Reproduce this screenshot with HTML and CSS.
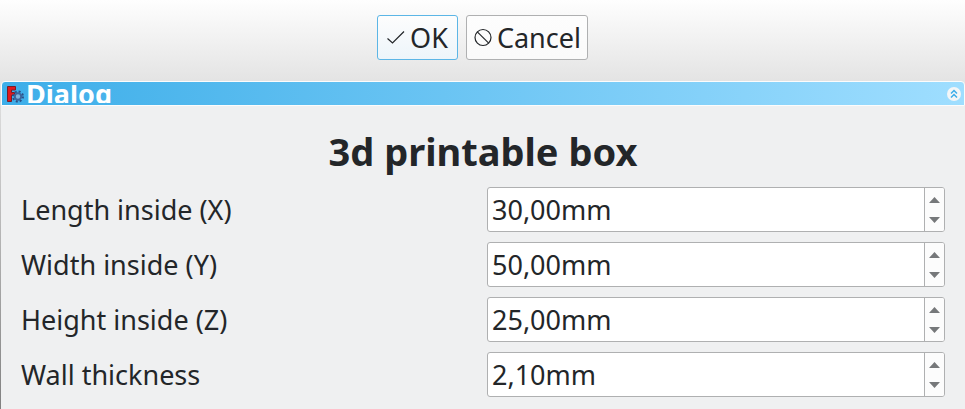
FILE: index.html
```html
<!DOCTYPE html>
<html lang="en">
<head>
<meta charset="utf-8">
<meta name="viewport" content="width=device-width, initial-scale=1">
<title>3d printable box</title>
<link rel="stylesheet" href="styles.css">
</head>
<body>
<form class="task">
  <div class="actions">
    <button class="button button-default" type="button">
      <svg class="button-icon" viewBox="0 0 20 20" aria-hidden="true"><path d="M1.5 10.500 6.500 15 18 3.500"/></svg>
      OK
    </button>
    <button class="button" type="button">
      <svg class="button-icon" viewBox="0 0 20 20" aria-hidden="true"><circle cx="10" cy="9.500" r="8"/><path d="M4.300 3.800 15.700 15.200"/></svg>
      Cancel
    </button>
  </div>
  <section class="panel">
    <header class="panel-header">
      <svg class="logo" viewBox="0 0 18 18" aria-hidden="true">
        <path class="logo-mark" d="M1.500 1.500H9.500V5H5.500V7.500H8.500V10.500H5.500V16.500H1.500z"/>
        <circle class="gear-teeth" cx="12" cy="11.500" r="5"/>
        <circle class="gear-ring" cx="12" cy="11.500" r="3.200"/>
      </svg>
      <h2 class="panel-title">Dialog</h2>
      <button class="collapse" type="button" aria-label="Collapse">
        <svg viewBox="0 0 14 14" aria-hidden="true"><path d="M4 6.500 7 3.500l3 3M4 10.500l3-3 3 3"/></svg>
      </button>
    </header>
    <div class="panel-body">
      <h1 class="heading">3d printable box</h1>
      <div class="row">
        <label for="length">Length inside (X)</label>
        <div class="spin">
          <input id="length" type="text" value="30,00mm">
          <div class="steps">
            <button class="step" type="button" aria-label="Increase length"><svg viewBox="0 0 11 6"><path d="M0 6 5.500 0 11 6z"/></svg></button>
            <button class="step" type="button" aria-label="Decrease length"><svg viewBox="0 0 11 6"><path d="M0 0h11L5.500 6z"/></svg></button>
          </div>
        </div>
      </div>
      <div class="row">
        <label for="width">Width inside (Y)</label>
        <div class="spin">
          <input id="width" type="text" value="50,00mm">
          <div class="steps">
            <button class="step" type="button" aria-label="Increase width"><svg viewBox="0 0 11 6"><path d="M0 6 5.500 0 11 6z"/></svg></button>
            <button class="step" type="button" aria-label="Decrease width"><svg viewBox="0 0 11 6"><path d="M0 0h11L5.500 6z"/></svg></button>
          </div>
        </div>
      </div>
      <div class="row">
        <label for="height">Height inside (Z)</label>
        <div class="spin">
          <input id="height" type="text" value="25,00mm">
          <div class="steps">
            <button class="step" type="button" aria-label="Increase height"><svg viewBox="0 0 11 6"><path d="M0 6 5.500 0 11 6z"/></svg></button>
            <button class="step" type="button" aria-label="Decrease height"><svg viewBox="0 0 11 6"><path d="M0 0h11L5.500 6z"/></svg></button>
          </div>
        </div>
      </div>
      <div class="row">
        <label for="wall">Wall thickness</label>
        <div class="spin">
          <input id="wall" type="text" value="2,10mm">
          <div class="steps">
            <button class="step" type="button" aria-label="Increase wall thickness"><svg viewBox="0 0 11 6"><path d="M0 6 5.500 0 11 6z"/></svg></button>
            <button class="step" type="button" aria-label="Decrease wall thickness"><svg viewBox="0 0 11 6"><path d="M0 0h11L5.500 6z"/></svg></button>
          </div>
        </div>
      </div>
    </div>
  </section>
</form>
</body>
</html>
```
FILE: styles.css
```css
* {
  box-sizing: border-box;
}

body {
  margin: 0;
  color: #232629;
  font: 27px/36px "Noto Sans", sans-serif;
}

button,
input {
  margin: 0;
  color: inherit;
  font: inherit;
}

svg {
  display: block;
}

.task {
  background: linear-gradient(#fefefe, #e4e4e4 80px, #808080);
}

.actions {
  display: flex;
  justify-content: center;
  gap: 8px;
  padding: 15px 0 21px;
}

.button {
  display: flex;
  align-items: center;
  gap: 4px;
  height: 45px;
  padding: 0 6px;
  border: 1px solid #afb0b1;
  border-radius: 3px;
  background: linear-gradient(#fdfdfd, #fafafa);
}

.button-default {
  padding: 0 9px 0 8px;
  border-color: #5cb6e6;
  background: linear-gradient(#fdfdfd, #edf5fa);
}

.button-icon {
  width: 20px;
  height: 20px;
  fill: none;
  stroke: #232629;
  stroke-width: 1.2;
}

.panel {
  padding-left: 1px;
}

.panel-header {
  display: flex;
  align-items: center;
  height: 25px;
  padding: 0 3px 0 4px;
  border: 1px solid #fcfcfc;
  border-radius: 4px 4px 0 0;
  background: linear-gradient(90deg, #3daee9, #9fdeff);
}

.logo {
  width: 18px;
  height: 18px;
}

.logo-mark {
  fill: #e0181c;
  stroke: #781c28;
  stroke-width: 1;
}

.gear-teeth {
  fill: none;
  stroke: #2c4f86;
  stroke-width: 2;
  stroke-dasharray: 2 1.93;
}

.gear-ring {
  fill: #7fb4dc;
  stroke: #3c659c;
  stroke-width: 2;
}

.panel-title {
  flex: 1;
  height: 18px;
  margin: 0 0 0 2px;
  overflow: hidden;
  color: #fff;
  font-size: 27px;
  line-height: 18px;
}

.collapse {
  width: 14px;
  height: 14px;
  padding: 0;
  border: 0;
  border-radius: 50%;
  background: #f4f6f7;
}

.collapse path {
  fill: none;
  stroke: #3daee9;
  stroke-width: 1.500;
}

.panel-body {
  display: flex;
  flex-direction: column;
  gap: 10px;
  padding: 20px 20px 12px;
  background: #eff0f1;
}

.heading {
  margin: 0;
  font-size: 38px;
  line-height: 51px;
  text-align: center;
}

.row {
  display: grid;
  grid-template-columns: 1fr 1fr;
  align-items: center;
  gap: 8px;
}

.spin {
  display: flex;
  height: 45px;
  overflow: hidden;
  border: 1px solid #afb0b1;
  border-radius: 3px;
  background: #fff;
}

.spin input {
  flex: 1;
  min-width: 0;
  padding: 0 4px;
  border: 0;
  background: none;
}

.steps {
  display: flex;
  flex-direction: column;
  justify-content: center;
  width: 20px;
  padding-right: 1px;
  border-left: 1px solid #afb0b1;
  background: #fcfcfc;
}

.step {
  display: flex;
  align-items: center;
  justify-content: center;
  height: 20px;
  padding: 0;
  border: 0;
  background: none;
}

.step svg {
  width: 11px;
  height: 6px;
  fill: #76787a;
}
```
